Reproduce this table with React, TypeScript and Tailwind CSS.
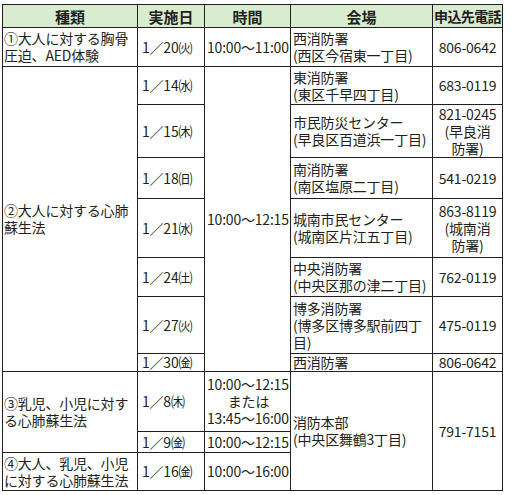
import React from "react";

const ink = "border-[#231f20]";

function Td({
  children,
  className = "",
  rowSpan,
}: {
  children?: React.ReactNode;
  className?: string;
  rowSpan?: number;
}) {
  return (
    <td
      rowSpan={rowSpan}
      className={`border ${ink} align-middle p-0 ${className}`}
    >
      {children}
    </td>
  );
}

const lines = (...xs: string[]) =>
  xs.map((x, i) => (
    <React.Fragment key={i}>
      {i > 0 && <br />}
      {x}
    </React.Fragment>
  ));

export default function App() {
  return (
    <div
      className="bg-white w-[511px] h-[495px] pt-[4px] pl-[2px] text-[#231f20]"
      style={{ fontFamily: '"Noto Sans CJK JP", "Noto Sans", sans-serif' }}
    >
      <table className="border-collapse table-fixed w-[500px] text-[14px] leading-[17px]">
        <colgroup>
          <col className="w-[135px]" />
          <col className="w-[67px]" />
          <col className="w-[86px]" />
          <col className="w-[142px]" />
          <col className="w-[70px]" />
        </colgroup>
        <thead>
          <tr className="h-[23px] bg-[#d8ecd0] text-center text-[15px]">
            <th className={`border ${ink} p-0 font-bold`}>種類</th>
            <th className={`border ${ink} p-0 font-bold`}>実施日</th>
            <th className={`border ${ink} p-0 font-bold`}>時間</th>
            <th className={`border ${ink} p-0 font-bold`}>会場</th>
            <th className={`border ${ink} p-0 font-bold text-[14px] tracking-[-0.6px] whitespace-nowrap`}>申込先電話</th>
          </tr>
        </thead>
        <tbody className="tracking-[-0.2px]">
          <tr className="h-[39px]">
            <Td className="pl-[1px]">{lines("①大人に対する胸骨", "圧迫、AED体験")}</Td>
            <Td className="pl-[4px] whitespace-nowrap">1／20㈫</Td>
            <Td className="pl-[2px] whitespace-nowrap">10:00～11:00</Td>
            <Td className="pl-[2px]">{lines("西消防署", "(西区今宿東一丁目)")}</Td>
            <Td className="text-center">806-0642</Td>
          </tr>
          <tr className="h-[38px]">
            <Td rowSpan={7} className="pl-[1px]">{lines("②大人に対する心肺", "蘇生法")}</Td>
            <Td className="pl-[4px] whitespace-nowrap">1／14㈬</Td>
            <Td rowSpan={7} className="pl-[2px] whitespace-nowrap">10:00～12:15</Td>
            <Td className="pl-[2px]">{lines("東消防署", "(東区千早四丁目)")}</Td>
            <Td className="text-center">683-0119</Td>
          </tr>
          <tr className="h-[53px]">
            <Td className="pl-[4px] whitespace-nowrap">1／15㈭</Td>
            <Td className="pl-[2px]">{lines("市民防災センター", "(早良区百道浜一丁目)")}</Td>
            <Td className="text-center">{lines("821-0245", "(早良消", "防署)")}</Td>
          </tr>
          <tr className="h-[41px]">
            <Td className="pl-[4px] whitespace-nowrap">1／18㈰</Td>
            <Td className="pl-[2px]">{lines("南消防署", "(南区塩原二丁目)")}</Td>
            <Td className="text-center">541-0219</Td>
          </tr>
          <tr className="h-[59px]">
            <Td className="pl-[4px] whitespace-nowrap">1／21㈬</Td>
            <Td className="pl-[2px]">{lines("城南市民センター", "(城南区片江五丁目)")}</Td>
            <Td className="text-center">{lines("863-8119", "(城南消", "防署)")}</Td>
          </tr>
          <tr className="h-[39px]">
            <Td className="pl-[4px] whitespace-nowrap">1／24㈯</Td>
            <Td className="pl-[2px]">{lines("中央消防署", "(中央区那の津二丁目)")}</Td>
            <Td className="text-center">762-0119</Td>
          </tr>
          <tr className="h-[57px]">
            <Td className="pl-[4px] whitespace-nowrap">1／27㈫</Td>
            <Td className="pl-[2px]">{lines("博多消防署", "(博多区博多駅前四丁", "目)")}</Td>
            <Td className="text-center">475-0119</Td>
          </tr>
          <tr className="h-[18px]">
            <Td className="pl-[4px] whitespace-nowrap">1／30㈮</Td>
            <Td className="pl-[2px]">西消防署</Td>
            <Td className="text-center">806-0642</Td>
          </tr>
          <tr className="h-[60px]">
            <Td rowSpan={2} className="pl-[1px]">{lines("③乳児、小児に対す", "る心肺蘇生法")}</Td>
            <Td className="pl-[4px] whitespace-nowrap">1／8㈭</Td>
            <Td className="pl-[2px] whitespace-nowrap">
              10:00～12:15
              <br />
              <span className="block text-center">または</span>
              13:45～16:00
            </Td>
            <Td rowSpan={3} className="pl-[2px]">{lines("消防本部", "(中央区舞鶴3丁目)")}</Td>
            <Td rowSpan={3} className="text-center">791-7151</Td>
          </tr>
          <tr className="h-[21px]">
            <Td className="pl-[4px] whitespace-nowrap">1／9㈮</Td>
            <Td className="pl-[2px] whitespace-nowrap">10:00～12:15</Td>
          </tr>
          <tr className="h-[38px]">
            <Td className="pl-[1px]">{lines("④大人、乳児、小児", "に対する心肺蘇生法")}</Td>
            <Td className="pl-[4px] whitespace-nowrap">1／16㈮</Td>
            <Td className="pl-[2px] whitespace-nowrap">10:00～16:00</Td>
          </tr>
        </tbody>
      </table>
    </div>
  );
}
